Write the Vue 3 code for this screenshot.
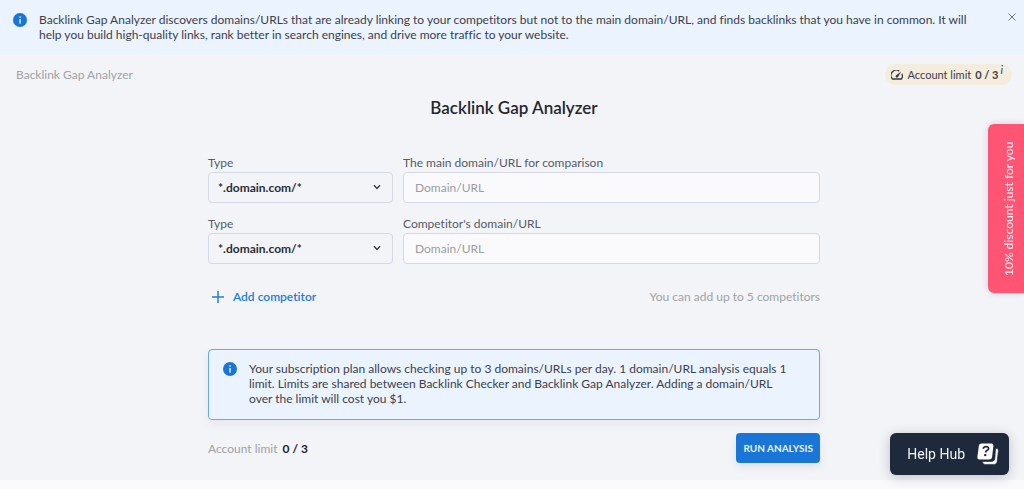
<script setup>
import { ref } from 'vue'

const bannerOpen = ref(true)
const used = ref(0)
const total = ref(3)
const rows = ref([
  { id: 1, label: 'The main domain/URL for comparison', type: '*.domain.com/*', url: '' },
  { id: 2, label: "Competitor's domain/URL", type: '*.domain.com/*', url: '' }
])

function addCompetitor() {
  if (rows.value.length < 6) {
    rows.value.push({ id: Date.now(), label: "Competitor's domain/URL", type: '*.domain.com/*', url: '' })
  }
}
</script>

<template>
  <div class="page">
    <div v-if="bannerOpen" class="banner">
      <svg class="info" viewBox="0 0 14 14" aria-hidden="true">
        <circle cx="7" cy="7" r="7" fill="#1976d6" />
        <rect x="6.3" y="3.4" width="1.5" height="1.5" fill="#dceaff" />
        <rect x="6.3" y="6" width="1.5" height="4.6" fill="#dceaff" />
      </svg>
      <p class="banner-text">
        Backlink Gap Analyzer discovers domains/URLs that are already linking to your competitors but not to the main domain/URL, and finds backlinks that you have in common. It will help you build high-quality links, rank better in search engines, and drive more traffic to your website.
      </p>
      <button class="close" type="button" aria-label="Close" @click="bannerOpen = false">
        <svg viewBox="0 0 8 8" aria-hidden="true"><path d="M.5 .5 7.5 7.5M7.5 .5 .5 7.5" /></svg>
      </button>
    </div>

    <main class="main">
      <div class="topbar">
        <span class="crumb">Backlink Gap Analyzer</span>
        <span class="pill">
          <svg class="gauge" viewBox="0 0 12 10" aria-hidden="true">
            <path d="M8.2 1.1A5.2 5.2 0 0 0 1.5 9H10.5A5.2 5.2 0 0 0 10.9 3.8" />
            <path class="needle" d="M10.2 1.6 7 7.1A1.3 1.3 0 0 1 4.9 5.4Z" />
          </svg>
          <span>Account limit</span>
          <b>{{ used }} / {{ total }}</b>
          <i class="hint">i</i>
        </span>
      </div>

      <h1 class="title">Backlink Gap Analyzer</h1>

      <form class="form" @submit.prevent>
        <div v-for="row in rows" :key="row.id" class="row">
          <div class="field">
            <label :for="'type-' + row.id">Type</label>
            <div class="select-wrap">
              <select :id="'type-' + row.id" v-model="row.type">
                <option>*.domain.com/*</option>
              </select>
              <svg class="chevron" viewBox="0 0 8 6" aria-hidden="true"><path d="M1 1.2 4 4.4 7 1.2" /></svg>
            </div>
          </div>
          <div class="field">
            <label :for="'url-' + row.id">{{ row.label }}</label>
            <input :id="'url-' + row.id" v-model="row.url" type="text" placeholder="Domain/URL" />
          </div>
        </div>

        <div class="add-row">
          <button class="add" type="button" @click="addCompetitor">
            <svg viewBox="0 0 12 12" aria-hidden="true"><path d="M6 0V12M0 6H12" /></svg>
            Add competitor
          </button>
          <span class="muted">You can add up to 5 competitors</span>
        </div>

        <div class="notice">
          <svg class="info" viewBox="0 0 14 14" aria-hidden="true">
            <circle cx="7" cy="7" r="7" fill="#1976d6" />
            <rect x="6.3" y="3.4" width="1.5" height="1.5" fill="#dceaff" />
            <rect x="6.3" y="6" width="1.5" height="4.6" fill="#dceaff" />
          </svg>
          <p>
            Your subscription plan allows checking up to 3 domains/URLs per day. 1 domain/URL analysis equals 1 limit. Limits are shared between Backlink Checker and Backlink Gap Analyzer. Adding a domain/URL over the limit will cost you $1.
          </p>
        </div>

        <div class="actions">
          <span class="muted">Account limit <b>{{ used }} / {{ total }}</b></span>
          <button class="run" type="submit">RUN ANALYSIS</button>
        </div>
      </form>
    </main>

    <button class="discount" type="button">10% discount just for you</button>

    <button class="help" type="button">
      Help Hub
      <svg viewBox="0 0 22 22" aria-hidden="true">
        <path d="M18.6 5.6h1.2q1.8 0 1.6 1.8l-1.3 11.2q-.3 2.8-2.9 2.8H8.2q-2.6 0-2.7-2.9h8.9q3.2 0 3.5-3.2Z" fill="#fff" />
        <path d="M4.6.5h9.8q2.3 0 2 2.3l-1.3 11.1q-.3 2.6-2.9 2.6H2.6q-2.5 0-2.2-2.5L1.8 2.9Q2.1.5 4.6.5Z" fill="#fff" />
        <path d="M6.2 5.7q.5-2 2.9-2 2.6 0 2.5 1.9-.1 1.2-1.7 2-1.2.6-1.4 1.9" fill="none" stroke="#1e293b" stroke-width="1.7" />
        <rect x="7.2" y="11" width="2.1" height="2.1" fill="#1e293b" />
      </svg>
    </button>
  </div>
</template>

<style>
body {
  background: #fafafd;
}
</style>

<style scoped>
.page {
  font-family: Lato, "Noto Sans", sans-serif;
  font-size: 12px;
  line-height: 15px;
  font-variant-ligatures: none;
  color: #3b414c;
}
.page * {
  box-sizing: border-box;
}
button,
input,
select {
  font: inherit;
  color: inherit;
}
button {
  border: 0;
  padding: 0;
  background: none;
  cursor: pointer;
}
p {
  margin: 0;
}
.banner {
  display: flex;
  align-items: flex-start;
  padding: 12px 8px 13px 13px;
  background: #ebf3ff;
}
.info {
  flex: none;
  width: 14px;
  height: 14px;
  margin-top: 1px;
}
.banner-text {
  flex: 1;
  margin: 0 20px 0 12px;
}
.close {
  display: flex;
  margin-top: 1px;
}
.close svg {
  width: 8px;
  height: 8px;
  stroke: #63788f;
  stroke-width: 1;
}
.main {
  padding: 9px 12px 17px 16px;
  background: #f3f4f8;
}
.topbar {
  display: flex;
  align-items: center;
  justify-content: space-between;
}
.crumb,
.muted {
  color: #a0a2a6;
}
.pill {
  display: flex;
  align-items: center;
  height: 21px;
  padding: 0 9px 0 6px;
  border-radius: 11px;
  background: #f4eddd;
  font-size: 11px;
}
.gauge {
  width: 12px;
  height: 10px;
  margin-right: 5px;
  fill: none;
  stroke: #343a44;
  stroke-width: 1.3;
}
.gauge .needle {
  fill: #343a44;
  stroke: none;
}
.pill b {
  margin-left: 4px;
  font-weight: 700;
}
.hint {
  align-self: flex-start;
  margin-left: 2px;
  font-size: 11px;
  line-height: 12px;
}
.title {
  margin: 12px 0 0;
  font-size: 17px;
  line-height: 22px;
  font-weight: 600;
  text-align: center;
  color: #23272f;
}
.form {
  max-width: 612px;
  margin: 36px auto 0;
}
.row {
  display: grid;
  grid-template-columns: 185px 1fr;
  gap: 10px;
  margin-bottom: 13px;
}
.field label {
  display: block;
  margin-bottom: 2px;
  color: #535b66;
}
.select-wrap {
  position: relative;
}
.field select,
.field input {
  display: block;
  width: 100%;
  height: 31px;
  padding: 0 11px;
  border: 1px solid #d5d8e5;
  border-radius: 4px;
  background: #fafafd;
  outline: 0;
}
.field select {
  appearance: none;
  padding: 0 9px;
  background: #f3f4f8;
  font-weight: 700;
  color: #292e37;
}
.field input::placeholder {
  color: #9b9da1;
}
.chevron {
  position: absolute;
  top: 12px;
  right: 12px;
  width: 8px;
  height: 6px;
  fill: none;
  stroke: #333a46;
  stroke-width: 1.4;
  pointer-events: none;
}
.add-row {
  display: flex;
  align-items: center;
  justify-content: space-between;
  margin-top: 25px;
}
.add {
  display: flex;
  align-items: center;
  gap: 9px;
  padding-left: 4px;
  font-weight: 600;
  color: #237dd7;
}
.add svg {
  width: 12px;
  height: 12px;
  stroke: #237dd7;
  stroke-width: 1.5;
}
.notice {
  display: flex;
  gap: 12px;
  margin-top: 45px;
  padding: 11px 28px 13px 14px;
  border: 1px solid #6ba8e5;
  border-radius: 4px;
  background: #ebf3ff;
  box-shadow: 0 4px 8px rgba(60, 70, 100, 0.07);
}
.actions {
  display: flex;
  align-items: center;
  justify-content: space-between;
  margin-top: 13px;
}
.actions b {
  margin-left: 2px;
  color: #1f242c;
}
.run {
  height: 30px;
  padding: 0 7px;
  border-radius: 4px;
  background: #1976d6;
  box-shadow: 0 4px 8px rgba(60, 70, 100, 0.1);
  font-size: 10px;
  font-weight: 700;
  color: #e8f2ff;
}
.discount {
  position: fixed;
  top: 124px;
  right: 0;
  width: 36px;
  height: 169px;
  padding-right: 6px;
  border-radius: 0 6px 6px 0;
  background: #ff5574;
  box-shadow: 0 0 6px rgba(60, 70, 100, 0.2);
  font-weight: 500;
  color: #fff0f3;
  writing-mode: vertical-rl;
  transform: rotate(180deg);
}
.help {
  position: fixed;
  right: 15px;
  bottom: 14px;
  display: flex;
  align-items: center;
  gap: 12px;
  height: 42px;
  padding: 0 10px 0 17px;
  border-radius: 6px;
  background: #1e293b;
  box-shadow: 0 2px 12px rgba(30, 41, 59, 0.25);
  font-family: Roboto, sans-serif;
  font-size: 14px;
  color: #f3f5f9;
}
.help svg {
  width: 22px;
  height: 22px;
  overflow: visible;
}
.help path:first-child {
  stroke: #1e293b;
  stroke-width: 0.6;
}
.help path:nth-child(2) {
  stroke: #1e293b;
  stroke-width: 1.2;
  paint-order: stroke;
}
</style>
